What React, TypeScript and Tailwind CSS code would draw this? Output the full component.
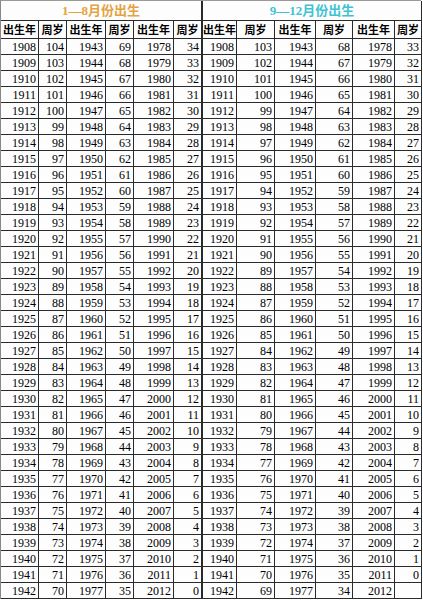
import React from "react";

const leftYears = Array.from({ length: 35 }, (_, i) => 1908 + i);

function leftAge(y: number) {
  return String(2012 - y);
}
function rightAge(y: number) {
  const a = 2011 - y;
  return a >= 0 ? String(a) : "";
}

const cellBase =
  "border-r border-b border-[#2a2a2a] flex items-center justify-end pr-[2px] text-[12px] leading-none text-black";

const headBase =
  "border-r border-b border-[#2a2a2a] flex items-center justify-center whitespace-nowrap text-[11px] font-bold text-black leading-none font-['Noto_Sans_CJK_SC',sans-serif]";

export default function App() {
  const rows: React.ReactNode[] = [];
  leftYears.forEach((y, i) => {
    const vals = [
      String(y),
      leftAge(y),
      String(y + 35),
      leftAge(y + 35),
      String(y + 70),
      leftAge(y + 70),
      String(y),
      rightAge(y),
      String(y + 35),
      rightAge(y + 35),
      String(y + 70),
      rightAge(y + 70),
    ];
    vals.forEach((v, j) => {
      rows.push(
        <div
          key={`${i}-${j}`}
          className={j === 5 ? `${cellBase} border-r-2` : cellBase}
        >
          {v}
        </div>
      );
    });
  });

  const headers = ["出生年", "周岁", "出生年", "周岁", "出生年", "周岁", "出生年", "周岁", "出生年", "周岁", "出生年", "周岁"];

  return (
    <div className="bg-white w-[423px] h-[600px] font-['Liberation_Serif','Noto_Sans_CJK_SC',serif]">
      <div className="grid grid-cols-[38px_28px_39px_28px_40px_29px_34px_38px_41px_37px_42px_27px] grid-rows-[20px_18px_repeat(35,16px)] w-[421px] border-l border-t border-l-[#888] border-t-[#999] bg-[#fdfdfd]">
        <div className="col-span-6 border-r-2 border-b border-[#2a2a2a] flex items-center justify-center text-[13px] font-bold text-[#e3a341] leading-none">
          1—8月份出生
        </div>
        <div className="col-span-6 border-r border-b border-[#2a2a2a] flex items-center justify-center text-[13px] font-bold text-[#3fc3d3] leading-none">
          9—12月份出生
        </div>
        {headers.map((h, j) => (
          <div
            key={`h${j}`}
            className={j === 5 ? `${headBase} border-r-2` : headBase}
          >
            {h}
          </div>
        ))}
        {rows}
      </div>
    </div>
  );
}
